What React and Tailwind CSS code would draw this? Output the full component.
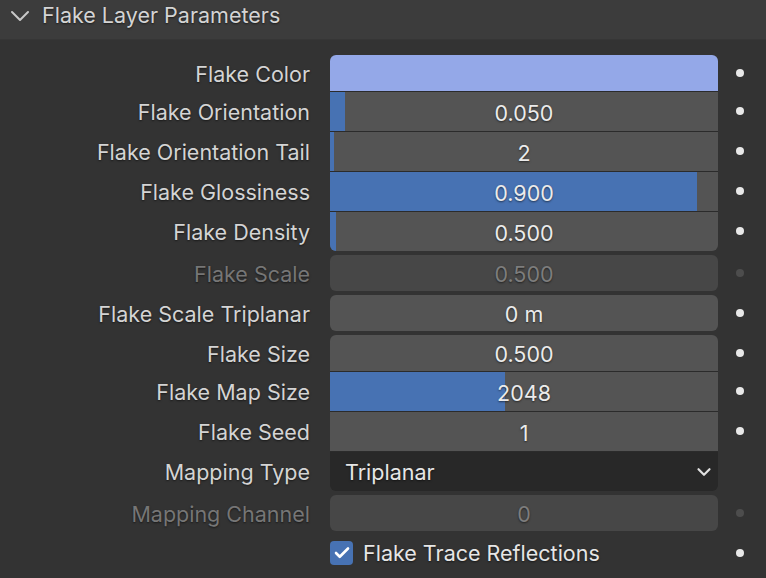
import { Check, ChevronDown } from 'lucide-react';

const shadow = '[text-shadow:0_1px_2px_rgba(0,0,0,0.55)]';

function Row({ label, disabled, mt = '', h = 'h-[40px]', children }) {
  return (
    <div className={`flex items-stretch ${mt} ${h}`}>
      <div
        className={`w-[330px] shrink-0 flex items-center justify-end pr-[20px] ${shadow} ${
          disabled ? 'text-[#767676]' : 'text-[#d4d4d4]'
        }`}
      >
        <span className="translate-y-[2px]">{label}</span>
      </div>
      {children}
      <div className="flex-1 flex items-center pl-[18px]">
        <div className={`w-2 h-2 rounded-full ${disabled ? 'bg-[#4d4d4d]' : 'bg-[#e8e8e8]'}`} />
      </div>
    </div>
  );
}

function Slider({ value, fill, round = '', top = false, disabled }) {
  return (
    <div
      className={`relative w-[388px] shrink-0 overflow-hidden flex items-center justify-center ${round} ${
        top ? 'border-t border-[#2b2b2b]' : ''
      } ${disabled ? 'bg-[#474747] text-[#7d7d7d]' : 'bg-[#545454] text-[#ebebeb]'}`}
    >
      {fill > 0 && (
        <div className="absolute left-0 top-0 bottom-0 bg-[#4772b3]" style={{ width: fill }} />
      )}
      <span className={`relative translate-y-[2px] ${shadow}`}>{value}</span>
    </div>
  );
}

export default function App() {
  return (
    <div
      className="w-[766px] h-[578px] bg-[#333333] overflow-hidden text-[21.5px] leading-none"
      style={{ fontFamily: 'Inter, "Noto Sans", sans-serif' }}
    >
      <div className="h-[40px] bg-[#3c3c3c] flex items-start pt-[5px] border-b border-[#363636]">
        <svg width="20" height="12" viewBox="0 0 20 12" className="ml-[10px] mr-[12px] mt-[5px]">
          <path d="M2 2 L10 10 L18 2" fill="none" stroke="#c8c8c8" strokeWidth="2" strokeLinecap="round" strokeLinejoin="round" />
        </svg>
        <span className={`text-[#d4d4d4] ${shadow}`}>Flake Layer Parameters</span>
      </div>

      <Row label="Flake Color" mt="mt-[15px]" h="h-[36px]">
        <div className="w-[388px] shrink-0 rounded-t-[6px] bg-[#94a8e8]" />
      </Row>
      <Row label="Flake Orientation">
        <Slider value="0.050" fill={15} top />
      </Row>
      <Row label="Flake Orientation Tail">
        <Slider value="2" fill={4} top />
      </Row>
      <Row label="Flake Glossiness">
        <Slider value="0.900" fill={367} top />
      </Row>
      <Row label="Flake Density">
        <Slider value="0.500" fill={6} top round="rounded-b-[6px]" />
      </Row>

      <Row label="Flake Scale" disabled mt="mt-[4px]" h="h-[36px]">
        <Slider value="0.500" fill={0} disabled round="rounded-[6px]" />
      </Row>

      <Row label="Flake Scale Triplanar" mt="mt-[4px]" h="h-[36px]">
        <Slider value="0 m" fill={0} round="rounded-[6px]" />
      </Row>

      <Row label="Flake Size" mt="mt-[4px]" h="h-[36px]">
        <Slider value="0.500" fill={0} round="rounded-t-[6px]" />
      </Row>
      <Row label="Flake Map Size">
        <Slider value="2048" fill={175} top />
      </Row>
      <Row label="Flake Seed">
        <Slider value="1" fill={0} top />
      </Row>
      <div className="flex h-[40px]">
        <div className={`w-[330px] shrink-0 flex items-center justify-end pr-[20px] text-[#d4d4d4] ${shadow}`}>
          <span className="translate-y-[2px]">Mapping Type</span>
        </div>
        <div className="w-[388px] shrink-0 bg-[#282828] border-t border-[#2b2b2b] rounded-b-[6px] flex items-center justify-between pl-[15px] pr-[3px] text-[#e6e6e6]">
          <span className={`translate-y-[1px] ${shadow}`}>Triplanar</span>
          <ChevronDown size={22} strokeWidth={2.4} color="#e0e0e0" />
        </div>
      </div>

      <Row label="Mapping Channel" disabled mt="mt-[4px]" h="h-[36px]">
        <Slider value="0" fill={0} disabled round="rounded-[6px]" />
      </Row>

      <div className="flex h-[40px] mt-[2px]">
        <div className="w-[330px] shrink-0" />
        <div className="w-[388px] shrink-0 flex items-center">
          <div className="w-[23px] h-[24px] rounded-[4px] bg-[#4772b3] flex items-center justify-center">
            <Check size={18} strokeWidth={3.5} color="#ffffff" />
          </div>
          <span className={`ml-[10px] translate-y-[1px] text-[#e6e6e6] ${shadow}`}>Flake Trace Reflections</span>
        </div>
        <div className="flex-1 flex items-center pl-[18px]">
          <div className="w-2 h-2 rounded-full bg-[#e8e8e8]" />
        </div>
      </div>
    </div>
  );
}
